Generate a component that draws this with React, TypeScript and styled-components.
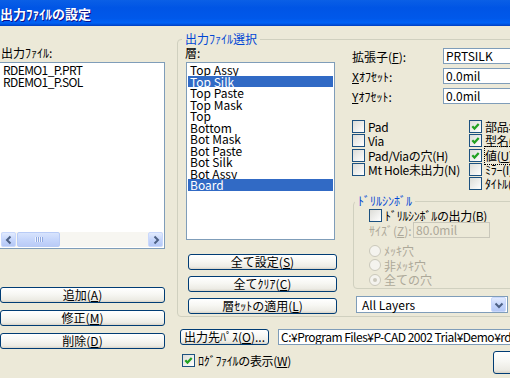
import React from "react";
import styled, { createGlobalStyle } from "styled-components";

const GlobalStyle = createGlobalStyle`
  html, body {
    margin: 0;
    padding: 0;
    background: #ece9d8;
    overflow: hidden;
  }
  body {
    font-family: "Noto Sans CJK JP", "Liberation Sans", sans-serif;
    font-size: 12px;
    color: #000;
  }
  * { box-sizing: border-box; }
`;

const Window = styled.div`
  width: 600px;
  height: 378px;
  margin-left: -10px;
  background: #ece9d8;
  overflow: hidden;
`;

const TitleBar = styled.div`
  height: 26px;
  padding-left: 10px;
  display: flex;
  align-items: center;
  color: #fff;
  font-size: 13px;
  font-weight: bold;
  text-shadow: 1px 1px 0 #0f1089;
  background: linear-gradient(180deg, #0a5fe6 0%, #0055e5 30%, #0058ea 70%, #0062f6 88%, #0052dd 94%, #003dc0 100%);
`;

const Body = styled.div`
  display: flex;
  align-items: flex-start;
  gap: 12px;
  padding: 6px 0 0 9px;
`;

const LeftCol = styled.div`
  flex: none;
  width: 166px;
  display: flex;
  flex-direction: column;
  padding-top: 14px;
`;

const Caption = styled.div<{ $indent: number }>`
  line-height: 14px;
  margin-left: ${(p) => p.$indent}px;
  white-space: nowrap;
`;

const ListBox = styled.div<{ $w: number; $h: number }>`
  width: ${(p) => p.$w}px;
  height: ${(p) => p.$h}px;
  margin-top: 2px;
  border: 1px solid #7f9db9;
  background: #fff;
  padding: 1px;
  display: flex;
  flex-direction: column;
  overflow: hidden;
`;

const ListItem = styled.div<{ $selected?: boolean; $tight?: boolean }>`
  height: 11.5px;
  line-height: 11.5px;
  padding-left: 2px;
  white-space: nowrap;
  letter-spacing: ${(p) => (p.$tight ? "-0.6px" : "0")};
  background: ${(p) => (p.$selected ? "#316ac5" : "transparent")};
  color: ${(p) => (p.$selected ? "#fff" : "#000")};
`;

const HScroll = styled.div`
  margin-top: auto;
  height: 15px;
  display: flex;
  background: #f7f6f1;
`;

const ScrollBtn = styled.div`
  width: 15px;
  height: 15px;
  flex: none;
  border: 1px solid #c9d8fc;
  border-radius: 2px;
  background: linear-gradient(180deg, #e2ebfe 0%, #c6d6fc 50%, #b4c8f6 100%);
  display: flex;
  align-items: center;
  justify-content: center;
`;

const ScrollThumb = styled.div`
  width: 43px;
  margin-left: 1px;
  border: 1px solid #b8cbf6;
  border-radius: 2px;
  background: linear-gradient(180deg, #d8e4fd 0%, #c6d6fb 50%, #b9cbf7 100%);
  display: flex;
  align-items: center;
  justify-content: center;
  gap: 1px;
`;

const Grip = styled.span`
  width: 1px;
  height: 5px;
  background: #eef3fe;
  box-shadow: 1px 0 0 #8fa8e0;
`;

const Spacer = styled.div`
  flex: 1;
`;

const ButtonStack = styled.div<{ $top: number; $gap: number; $left: number }>`
  display: flex;
  flex-direction: column;
  gap: ${(p) => p.$gap}px;
  margin-top: ${(p) => p.$top}px;
  padding-left: ${(p) => p.$left}px;
`;

const Btn = styled.div<{ $w: number; $h?: number }>`
  width: ${(p) => p.$w}px;
  height: ${(p) => p.$h ?? 16}px;
  flex: none;
  border: 1px solid #003c74;
  border-radius: 3px;
  background: linear-gradient(180deg, #ffffff 0%, #f7f7f3 45%, #ecebe4 85%, #d8d3c7 100%);
  display: flex;
  align-items: center;
  justify-content: center;
  line-height: 1;
  white-space: nowrap;
`;

const RightCol = styled.div`
  flex: none;
  width: 400px;
  display: flex;
  flex-direction: column;
`;

const Group = styled.fieldset<{ $pl: number; $pb: number }>`
  margin: 0;
  min-width: 0;
  padding: 0 0 ${(p) => p.$pb}px ${(p) => p.$pl}px;
  border: 1px solid #d0d0bf;
  border-radius: 4px;
`;

const Legend = styled.legend<{ $shift: number }>`
  margin-left: ${(p) => p.$shift}px;
  padding: 0 3px;
  line-height: 14px;
  color: #0046d5;
  white-space: nowrap;
`;

const GroupRow = styled.div`
  display: flex;
  align-items: flex-start;
  gap: 15px;
`;

const LayerCol = styled.div`
  flex: none;
  width: 151px;
  display: flex;
  flex-direction: column;
`;

const OptionsCol = styled.div`
  flex: 1;
  display: flex;
  flex-direction: column;
`;

const Fields = styled.div`
  display: flex;
  flex-direction: column;
  gap: 4px;
  margin-top: 2px;
`;

const FormRow = styled.div`
  display: flex;
  align-items: center;
  height: 16px;
`;

const FormLabel = styled.span<{ $w: number; $disabled?: boolean }>`
  width: ${(p) => p.$w}px;
  flex: none;
  white-space: nowrap;
  color: ${(p) => (p.$disabled ? "#aca899" : "#000")};
`;

const TextBox = styled.div<{ $w: number; $disabled?: boolean; $tight?: boolean }>`
  width: ${(p) => p.$w}px;
  height: 16px;
  flex: none;
  padding-left: 2px;
  line-height: 14px;
  white-space: nowrap;
  overflow: hidden;
  letter-spacing: ${(p) => (p.$tight ? "-0.5px" : "0")};
  border: 1px solid ${(p) => (p.$disabled ? "#c9c7ba" : "#7f9db9")};
  background: ${(p) => (p.$disabled ? "#ece9d8" : "#fff")};
  color: ${(p) => (p.$disabled ? "#aca899" : "#000")};
`;

const CheckGrid = styled.div`
  display: grid;
  grid-template-columns: 117px 1fr;
  grid-auto-rows: 14.3px;
  margin-top: 15.5px;
`;

const CheckItem = styled.label<{ $h?: number }>`
  display: flex;
  align-items: center;
  gap: 3px;
  height: ${(p) => p.$h ?? 14.3}px;
  white-space: nowrap;
  letter-spacing: -0.3px;
`;

const Box = styled.span`
  width: 13px;
  height: 13px;
  flex: none;
  border: 1px solid #1c5180;
  background: linear-gradient(135deg, #dcdcd7 0%, #ffffff 100%);
  display: flex;
  align-items: center;
  justify-content: center;
`;

const Focus = styled.span`
  outline: 1px dotted #000;
  outline-offset: 0;
`;

const DrillGroup = styled(Group)`
  width: 190px;
  margin: 3.5px 0 0 1px;
`;

const RadioItem = styled.div`
  display: flex;
  align-items: center;
  gap: 3px;
  height: 14.5px;
  color: #aca899;
  white-space: nowrap;
`;

const Radio = styled.span<{ $on?: boolean }>`
  width: 12px;
  height: 12px;
  flex: none;
  border-radius: 50%;
  border: 1px solid #cac8bb;
  background: #f4f3ee;
  display: flex;
  align-items: center;
  justify-content: center;
  &::after {
    content: "";
    display: ${(p) => (p.$on ? "block" : "none")};
    width: 4px;
    height: 4px;
    border-radius: 50%;
    background: #cac8bb;
  }
`;

const RadioList = styled.div`
  display: flex;
  flex-direction: column;
  margin-top: 5px;
`;

const Combo = styled.div`
  width: 152px;
  height: 17px;
  margin: 7.5px 0 0 4px;
  border: 1px solid #7f9db9;
  background: #fff;
  display: flex;
  align-items: center;
  padding: 0 1px 0 5px;
`;

const ComboText = styled.span`
  flex: 1;
  white-space: nowrap;
`;

const PathRow = styled.div`
  display: flex;
  align-items: center;
  gap: 9px;
  margin: 12px 0 0 3px;
`;

const LogRow = styled.div`
  display: flex;
  align-items: flex-start;
  margin-top: 6px;
  padding: 0 9px 0 5px;
`;

const LogCheck = styled(CheckItem)`
  margin-top: 3px;
  height: 13px;
`;

const Push = styled(Btn)`
  margin-left: auto;
`;

const Tick = () => (
  <svg width="11" height="11" viewBox="0 0 11 11">
    <polyline points="2.3,5.2 4.5,7.6 8.7,3" fill="none" stroke="#21a121" strokeWidth="2.2" />
  </svg>
);

const Chevron = ({ dir }: { dir: "left" | "right" | "down" }) => {
  const pts = dir === "left" ? "7.5,2.5 4,6 7.5,9.5" : dir === "right" ? "4.5,2.5 8,6 4.5,9.5" : "2.5,4.5 6,8 9.5,4.5";
  return (
    <svg width="12" height="12" viewBox="0 0 12 12">
      <polyline points={pts} fill="none" stroke="#4d6185" strokeWidth="2" />
    </svg>
  );
};

const Check = ({ checked, children }: { checked?: boolean; children?: React.ReactNode }) => (
  <CheckItem>
    <Box>{checked && <Tick />}</Box>
    <span>{children}</span>
  </CheckItem>
);

const layers = ["Top Assy", "Top Silk", "Top Paste", "Top Mask", "Top", "Bottom", "Bot Mask", "Bot Paste", "Bot Silk", "Bot Assy", "Board"];
const picked = ["Top Silk", "Board"];

export default function App() {
  return (
    <>
      <GlobalStyle />
      <Window>
        <TitleBar>出力ﾌｧｲﾙの設定</TitleBar>
        <Body>
          <LeftCol>
            <Caption $indent={2}>出力ﾌｧｲﾙ:</Caption>
            <ListBox $w={166} $h={187}>
              <ListItem $tight>RDEMO1_P.PRT</ListItem>
              <ListItem $tight>RDEMO1_P.SOL</ListItem>
              <HScroll>
                <ScrollBtn>
                  <Chevron dir="left" />
                </ScrollBtn>
                <ScrollThumb>
                  <Grip />
                  <Grip />
                  <Grip />
                  <Grip />
                </ScrollThumb>
                <Spacer />
                <ScrollBtn>
                  <Chevron dir="right" />
                </ScrollBtn>
              </HScroll>
            </ListBox>
            <ButtonStack $top={38} $gap={7} $left={1}>
              <Btn $w={165}>追加(<u>A</u>)</Btn>
              <Btn $w={165}>修正(<u>M</u>)</Btn>
              <Btn $w={165}>削除(<u>D</u>)</Btn>
            </ButtonStack>
          </LeftCol>

          <RightCol>
            <Group $pl={8} $pb={2}>
              <Legend $shift={-4}>出力ﾌｧｲﾙ選択</Legend>
              <GroupRow>
                <LayerCol>
                  <Caption $indent={-1}>層:</Caption>
                  <ListBox $w={149} $h={178}>
                    {layers.map((name) => (
                      <ListItem key={name} $selected={picked.includes(name)}>
                        {name}
                      </ListItem>
                    ))}
                  </ListBox>
                  <ButtonStack $top={14} $gap={6} $left={2}>
                    <Btn $w={149}>全て設定(<u>S</u>)</Btn>
                    <Btn $w={149}>全てｸﾘｱ(<u>C</u>)</Btn>
                    <Btn $w={149}>層ｾｯﾄの適用(<u>L</u>)</Btn>
                  </ButtonStack>
                </LayerCol>

                <OptionsCol>
                  <Fields>
                    <FormRow>
                      <FormLabel $w={91}>拡張子(<u>F</u>):</FormLabel>
                      <TextBox $w={100}>PRTSILK</TextBox>
                    </FormRow>
                    <FormRow>
                      <FormLabel $w={91}>
                        <u>X</u>ｵﾌｾｯﾄ:
                      </FormLabel>
                      <TextBox $w={100}>0.0mil</TextBox>
                    </FormRow>
                    <FormRow>
                      <FormLabel $w={91}>
                        <u>Y</u>ｵﾌｾｯﾄ:
                      </FormLabel>
                      <TextBox $w={100}>0.0mil</TextBox>
                    </FormRow>
                  </Fields>

                  <CheckGrid>
                    <Check>Pad</Check>
                    <Check checked>部品名(R)</Check>
                    <Check>Via</Check>
                    <Check checked>型名(T)</Check>
                    <Check>Pad/Viaの穴(H)</Check>
                    <Check checked>
                      <Focus>
                        値(<u>U</u>)
                      </Focus>
                    </Check>
                    <Check>Mt Hole未出力(N)</Check>
                    <Check>ﾐﾗｰ(I)</Check>
                    <span />
                    <Check>ﾀｲﾄﾙ(K)</Check>
                  </CheckGrid>

                  <DrillGroup $pl={15} $pb={1}>
                    <Legend $shift={-14}>ﾄﾞﾘﾙｼﾝﾎﾞﾙ</Legend>
                    <CheckItem $h={14}>
                      <Box />
                      <span>ﾄﾞﾘﾙｼﾝﾎﾞﾙの出力(B)</span>
                    </CheckItem>
                    <FormRow>
                      <FormLabel $w={44} $disabled>
                        ｻｲｽﾞ(<u>Z</u>):
                      </FormLabel>
                      <TextBox $w={77} $disabled>
                        80.0mil
                      </TextBox>
                    </FormRow>
                    <RadioList>
                      <RadioItem>
                        <Radio />
                        ﾒｯｷ穴
                      </RadioItem>
                      <RadioItem>
                        <Radio />
                        非ﾒｯｷ穴
                      </RadioItem>
                      <RadioItem>
                        <Radio $on />
                        全ての穴
                      </RadioItem>
                    </RadioList>
                  </DrillGroup>

                  <Combo>
                    <ComboText>All Layers</ComboText>
                    <ScrollBtn>
                      <Chevron dir="down" />
                    </ScrollBtn>
                  </Combo>
                </OptionsCol>
              </GroupRow>
            </Group>

            <PathRow>
              <Btn $w={89}>出力先ﾊﾟｽ(<u>O</u>)...</Btn>
              <TextBox $w={300} $tight>
                C:¥Program Files¥P-CAD 2002 Trial¥Demo¥rdemo1.pcb
              </TextBox>
            </PathRow>

            <LogRow>
              <LogCheck>
                <Box>
                  <Tick />
                </Box>
                <span>
                  ﾛｸﾞﾌｧｲﾙの表示(<u>W</u>)
                </span>
              </LogCheck>
              <Push $w={75} $h={23}>
                OK
              </Push>
            </LogRow>
          </RightCol>
        </Body>
      </Window>
    </>
  );
}
